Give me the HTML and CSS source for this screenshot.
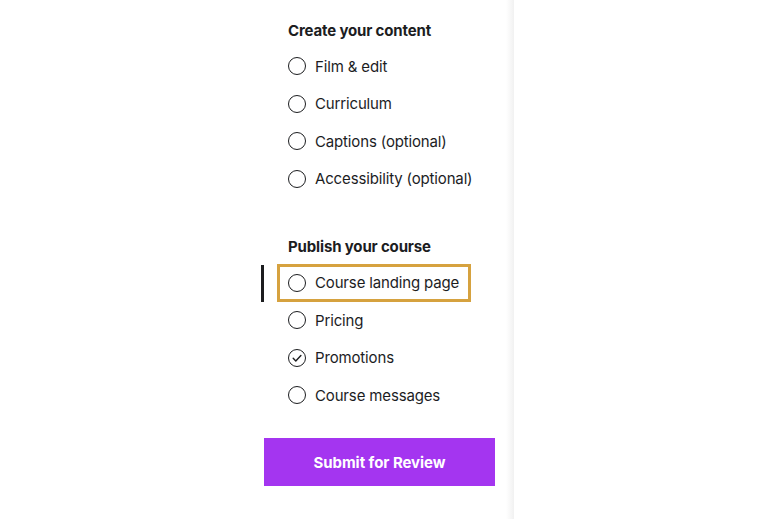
FILE: index.html
```html
<!DOCTYPE html>
<html lang="en">
<head>
<meta charset="utf-8">
<title>Course checklist</title>
<link rel="stylesheet" href="styles.css">
</head>
<body>
<div class="page">
  <aside class="sidebar">
    <section class="group first">
      <h3 class="heading">Create your content</h3>
      <ul class="list">
        <li class="item"><span class="circle"></span><span class="label">Film &amp; edit</span></li>
        <li class="item"><span class="circle"></span><span class="label">Curriculum</span></li>
        <li class="item"><span class="circle"></span><span class="label">Captions (optional)</span></li>
        <li class="item"><span class="circle"></span><span class="label">Accessibility (optional)</span></li>
      </ul>
    </section>
    <section class="group second">
      <h3 class="heading">Publish your course</h3>
      <ul class="list">
        <li class="item active"><span class="circle"></span><span class="label">Course landing page</span></li>
        <li class="item"><span class="circle"></span><span class="label">Pricing</span></li>
        <li class="item"><span class="circle checked"><svg viewBox="0 0 18 18" width="18" height="18"><path d="M5.2 9.3 L7.8 11.9 L12.9 6.4" fill="none" stroke="#1c1d1f" stroke-width="1.4" stroke-linecap="round" stroke-linejoin="round"/></svg></span><span class="label">Promotions</span></li>
        <li class="item"><span class="circle"></span><span class="label">Course messages</span></li>
      </ul>
    </section>
    <button class="submit">Submit for Review</button>
  </aside>
  <main class="main"></main>
</div>
</body>
</html>
```

FILE: styles.css
```css
* { box-sizing: border-box; }
html, body { margin: 0; padding: 0; background: #fff; }
body {
  font-family: Inter, "Liberation Sans", sans-serif;
  color: #1c1d1f;
  width: 774px;
  height: 519px;
  overflow: hidden;
}
.page { display: flex; height: 519px; }
.sidebar {
  width: 514px;
  flex: none;
  padding: 12.5px 19px 0 264px;
  background: linear-gradient(to right, #fff 0, #fff 506px, #f1f1f1 514px);
  display: flex;
  flex-direction: column;
}
.group { padding-left: 24px; }
.group.second { margin-top: 31.5px; }
.heading {
  margin: 0;
  height: 35px;
  display: flex;
  align-items: center;
  font-size: 15px;
  font-weight: 700;
  letter-spacing: -0.15px;
}
.list { list-style: none; margin: 0; padding: 0; }
.item {
  position: relative;
  display: flex;
  align-items: center;
  width: fit-content;
  height: 37.5px;
  margin-left: -11px;
  padding: 0 9px 0 8px;
  border: 3px solid transparent;
  font-size: 15px;
  letter-spacing: -0.15px;
}
.item.active { border-color: #d6a23f; }
.item.active::before {
  content: "";
  position: absolute;
  left: -19px;
  top: -2px;
  width: 3px;
  height: 37px;
  background: #1c1d1f;
}
.circle {
  width: 18px;
  height: 18px;
  border: 1px solid #1c1d1f;
  border-radius: 50%;
  flex: none;
  margin-right: 9px;
  position: relative;
}
.circle svg { position: absolute; left: -1px; top: -1px; }
.label { white-space: nowrap; }
.submit {
  margin-top: 24px;
  width: 231px;
  height: 48px;
  border: none;
  background: #a435f0;
  color: #fff;
  font-family: Inter, "Liberation Sans", sans-serif;
  font-size: 15px;
  font-weight: 700;
  letter-spacing: -0.05px;
  cursor: pointer;
}
.main { flex: 1; background: #fff; }
```
